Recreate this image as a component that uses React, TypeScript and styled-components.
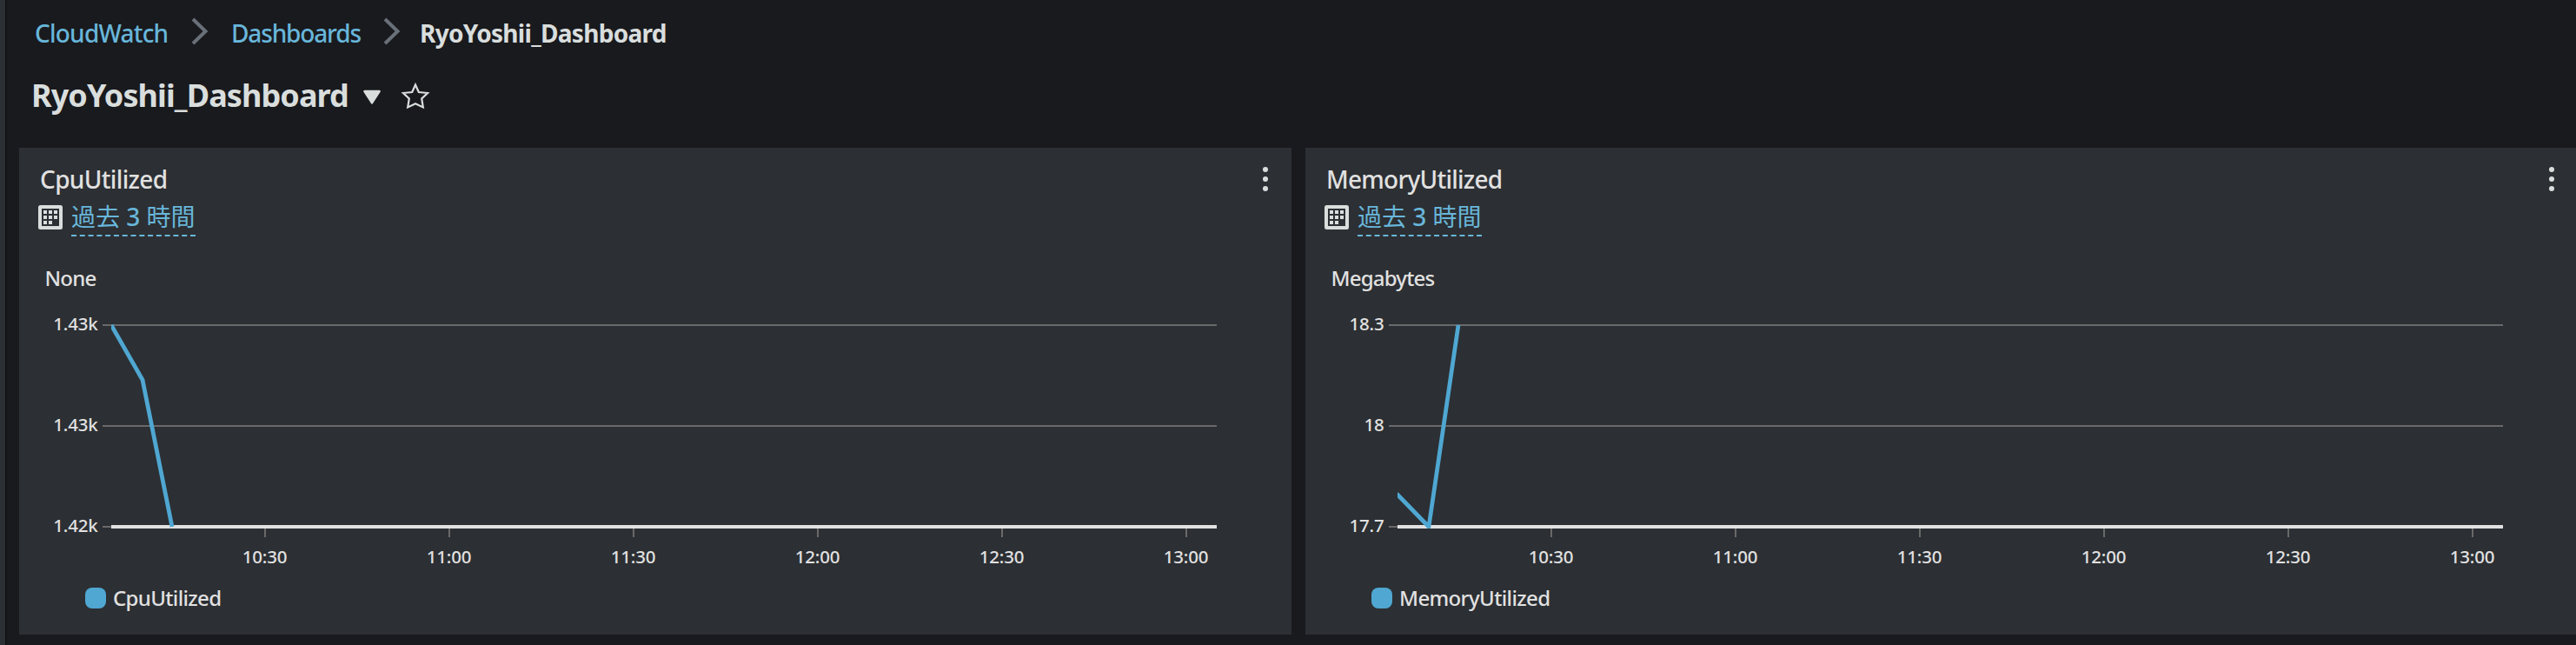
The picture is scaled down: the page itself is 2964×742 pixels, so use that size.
import React from "react";
import styled, { createGlobalStyle } from "styled-components";

const GlobalStyle = createGlobalStyle`
  * { box-sizing: border-box; }
  body {
    margin: 0;
    overflow: hidden;
    background: #191a1e;
    color: #e1e1e1;
    font-family: "Noto Sans", "Noto Sans CJK JP", sans-serif;
  }
`;

const Page = styled.div`
  display: flex;
  width: 100vw;
  height: 742px;
  overflow: hidden;
`;

const NavEdge = styled.div`
  flex: none;
  width: 6px;
  background: #2c2f33;
  box-shadow: 1px 0 2px rgba(0, 0, 0, 0.5);
`;

const Content = styled.main`
  flex: 1;
  min-width: 0;
  padding-left: 16px;
`;

const Breadcrumbs = styled.nav`
  display: flex;
  align-items: center;
  height: 76px;
  padding-left: 18px;
  font-size: 28px;
  font-weight: 500;
  line-height: 76px;
`;

const Crumb = styled.a<{ $w: number; $ls: number }>`
  width: ${(p) => p.$w}px;
  color: #68b6da;
  letter-spacing: ${(p) => p.$ls}px;
  white-space: nowrap;
`;

const CurrentCrumb = styled.span`
  margin-left: -4px;
  color: #d9dedd;
  font-weight: 700;
  letter-spacing: -0.7px;
`;

const Separator = styled.svg`
  flex: none;
  width: 20px;
  height: 32px;
  margin: 0 26px 4px 27px;
`;

const TitleBar = styled.header`
  display: flex;
  align-items: center;
  height: 94px;
  padding: 0 0 26px 14px;
  color: #d9dedd;
`;

const Title = styled.h1`
  width: 380px;
  margin: 0;
  font-size: 36px;
  font-weight: 700;
  line-height: 68px;
  letter-spacing: -0.9px;
  white-space: nowrap;
`;

const Caret = styled.svg`
  width: 22px;
  height: 18px;
  margin: 3px 0 0 1px;
`;

const Star = styled.svg`
  width: 34px;
  height: 34px;
  margin-left: 22px;
`;

const Widgets = styled.section`
  display: flex;
  gap: 16px;
`;

const Widget = styled.article`
  flex: none;
  width: 1464px;
  height: 560px;
  background: #2c2f33;
`;

const WidgetHeader = styled.header`
  display: flex;
  justify-content: space-between;
  height: 56px;
  padding: 22px 24px 0;
`;

const WidgetTitle = styled.h2<{ $ls: number }>`
  margin: -5px 0 0;
  font-size: 28px;
  font-weight: 500;
  line-height: 38px;
  letter-spacing: ${(p) => p.$ls}px;
`;

const Kebab = styled.svg`
  width: 12px;
  height: 28px;
`;

const TimeRange = styled.div`
  display: flex;
  height: 46px;
  padding-left: 22px;
`;

const CalendarIcon = styled.svg`
  width: 28px;
  height: 28px;
  margin: 10px 10px 0 0;
`;

const RangeLink = styled.a`
  width: 143px;
  height: 46px;
  border-bottom: 2px dashed #68b6da;
  color: #68b6da;
  font-size: 28px;
  line-height: 46px;
  white-space: nowrap;
`;

const Digit = styled.span`
  font-weight: 500;
`;

const Chart = styled.svg`
  display: block;
  width: 1464px;
  height: 404px;
`;

const AxisText = styled.text`
  fill: #e1e1e1;
  font-size: 20.5px;
  font-weight: 500;
  letter-spacing: -0.2px;
`;

const UnitText = styled(AxisText)`
  font-size: 24px;
  letter-spacing: -0.8px;
`;

const Legend = styled.div`
  display: flex;
  align-items: center;
  gap: 8px;
  height: 40px;
  margin-top: -8px;
  padding-left: 76px;
`;

const Swatch = styled.span`
  width: 24px;
  height: 24px;
  border-radius: 8px;
  background: #4fa7d2;
`;

const LegendLabel = styled.span`
  font-size: 24px;
  font-weight: 500;
  line-height: 40px;
  letter-spacing: -0.65px;
`;

interface Metric {
  name: string;
  unit: string;
  ticks: string[];
  points: string;
  titleSpacing: number;
}

const metrics: Metric[] = [
  {
    name: "CpuUtilized",
    unit: "None",
    ticks: ["1.43k", "1.43k", "1.42k"],
    points: "106,102 142,165 176,334",
    titleSpacing: -0.65,
  },
  {
    name: "MemoryUtilized",
    unit: "Megabytes",
    ticks: ["18.3", "18", "17.7"],
    points: "105,296 142,334 176,102",
    titleSpacing: -0.75,
  },
];

const times = ["10:30", "11:00", "11:30", "12:00", "12:30", "13:00"];
const rows = [102, 218, 334];

function Chevron() {
  return (
    <Separator viewBox="0 0 20 32">
      <path d="M2 2 L16.5 16 L2 30" fill="none" stroke="#6a7079" strokeWidth="4" />
    </Separator>
  );
}

function MetricChart({ metric }: { metric: Metric }) {
  const clip = `plot-${metric.name}`;
  return (
    <Chart viewBox="0 0 1464 404">
      <clipPath id={clip}>
        <rect x="106" y="101" width="1272" height="235" />
      </clipPath>
      <UnitText x="29.5" y="57">{metric.unit}</UnitText>
      {rows.map((y, i) => (
        <React.Fragment key={y}>
          <AxisText x="90.5" y={y + 6} textAnchor="end">{metric.ticks[i]}</AxisText>
          <path d={`M96 ${y} H1378`} stroke="#696969" strokeWidth="2" />
        </React.Fragment>
      ))}
      <path d="M106 334 H1378" stroke="#e1e1e1" strokeWidth="4" />
      {times.map((t, i) => (
        <React.Fragment key={t}>
          <path d={`M${283 + i * 212} 336 V346`} stroke="#696969" strokeWidth="2" />
          <AxisText x={282.5 + i * 212} y="376" textAnchor="middle">{t}</AxisText>
        </React.Fragment>
      ))}
      <polyline
        points={metric.points}
        fill="none"
        stroke="#4fa7d2"
        strokeWidth="4.8"
        strokeLinejoin="round"
        clipPath={`url(#${clip})`}
      />
    </Chart>
  );
}

function MetricWidget({ metric }: { metric: Metric }) {
  return (
    <Widget>
      <WidgetHeader>
        <WidgetTitle $ls={metric.titleSpacing}>{metric.name}</WidgetTitle>
        <Kebab viewBox="0 0 12 28" fill="#d9dedd">
          <circle cx="6" cy="3" r="3" />
          <circle cx="6" cy="14" r="3" />
          <circle cx="6" cy="25" r="3" />
        </Kebab>
      </WidgetHeader>
      <TimeRange>
        <CalendarIcon viewBox="0 0 28 28">
          <rect x="2" y="2" width="24" height="24" rx="0.5" fill="none" stroke="#d9dedd" strokeWidth="4" strokeLinejoin="round" />
          <path
            d="M6 6h4v4h-4z M12 6h4v4h-4z M18 6h4v4h-4z M6 12h4v4h-4z M12 12h4v4h-4z M18 12h4v4h-4z M6 18h4v4h-4z M12 18h4v4h-4z"
            fill="#d9dedd"
          />
        </CalendarIcon>
        <RangeLink>過去 <Digit>3</Digit> 時間</RangeLink>
      </TimeRange>
      <MetricChart metric={metric} />
      <Legend>
        <Swatch />
        <LegendLabel>{metric.name}</LegendLabel>
      </Legend>
    </Widget>
  );
}

export default function App() {
  return (
    <Page>
      <GlobalStyle />
      <NavEdge />
      <Content>
        <Breadcrumbs>
          <Crumb $w={153} $ls={-0.78}>CloudWatch</Crumb>
          <Chevron />
          <Crumb $w={148} $ls={-1.15}>Dashboards</Crumb>
          <Chevron />
          <CurrentCrumb>RyoYoshii_Dashboard</CurrentCrumb>
        </Breadcrumbs>
        <TitleBar>
          <Title>RyoYoshii_Dashboard</Title>
          <Caret viewBox="0 0 22 18">
            <path d="M2.4 2 H19.6 L11 15.4 Z" fill="#d9dedd" stroke="#d9dedd" strokeWidth="2.4" strokeLinejoin="round" />
          </Caret>
          <Star viewBox="0 0 34 34">
            <path
              d="M17 4.5 L20.8 13 L31 14 L24.2 20.4 L25.8 30.4 L17 26.3 L8.2 30.4 L9.8 20.4 L3 14 L13.2 13 Z"
              fill="none"
              stroke="#d9dedd"
              strokeWidth="2.2"
            />
          </Star>
        </TitleBar>
        <Widgets>
          {metrics.map((m) => (
            <MetricWidget key={m.name} metric={m} />
          ))}
        </Widgets>
      </Content>
    </Page>
  );
}
